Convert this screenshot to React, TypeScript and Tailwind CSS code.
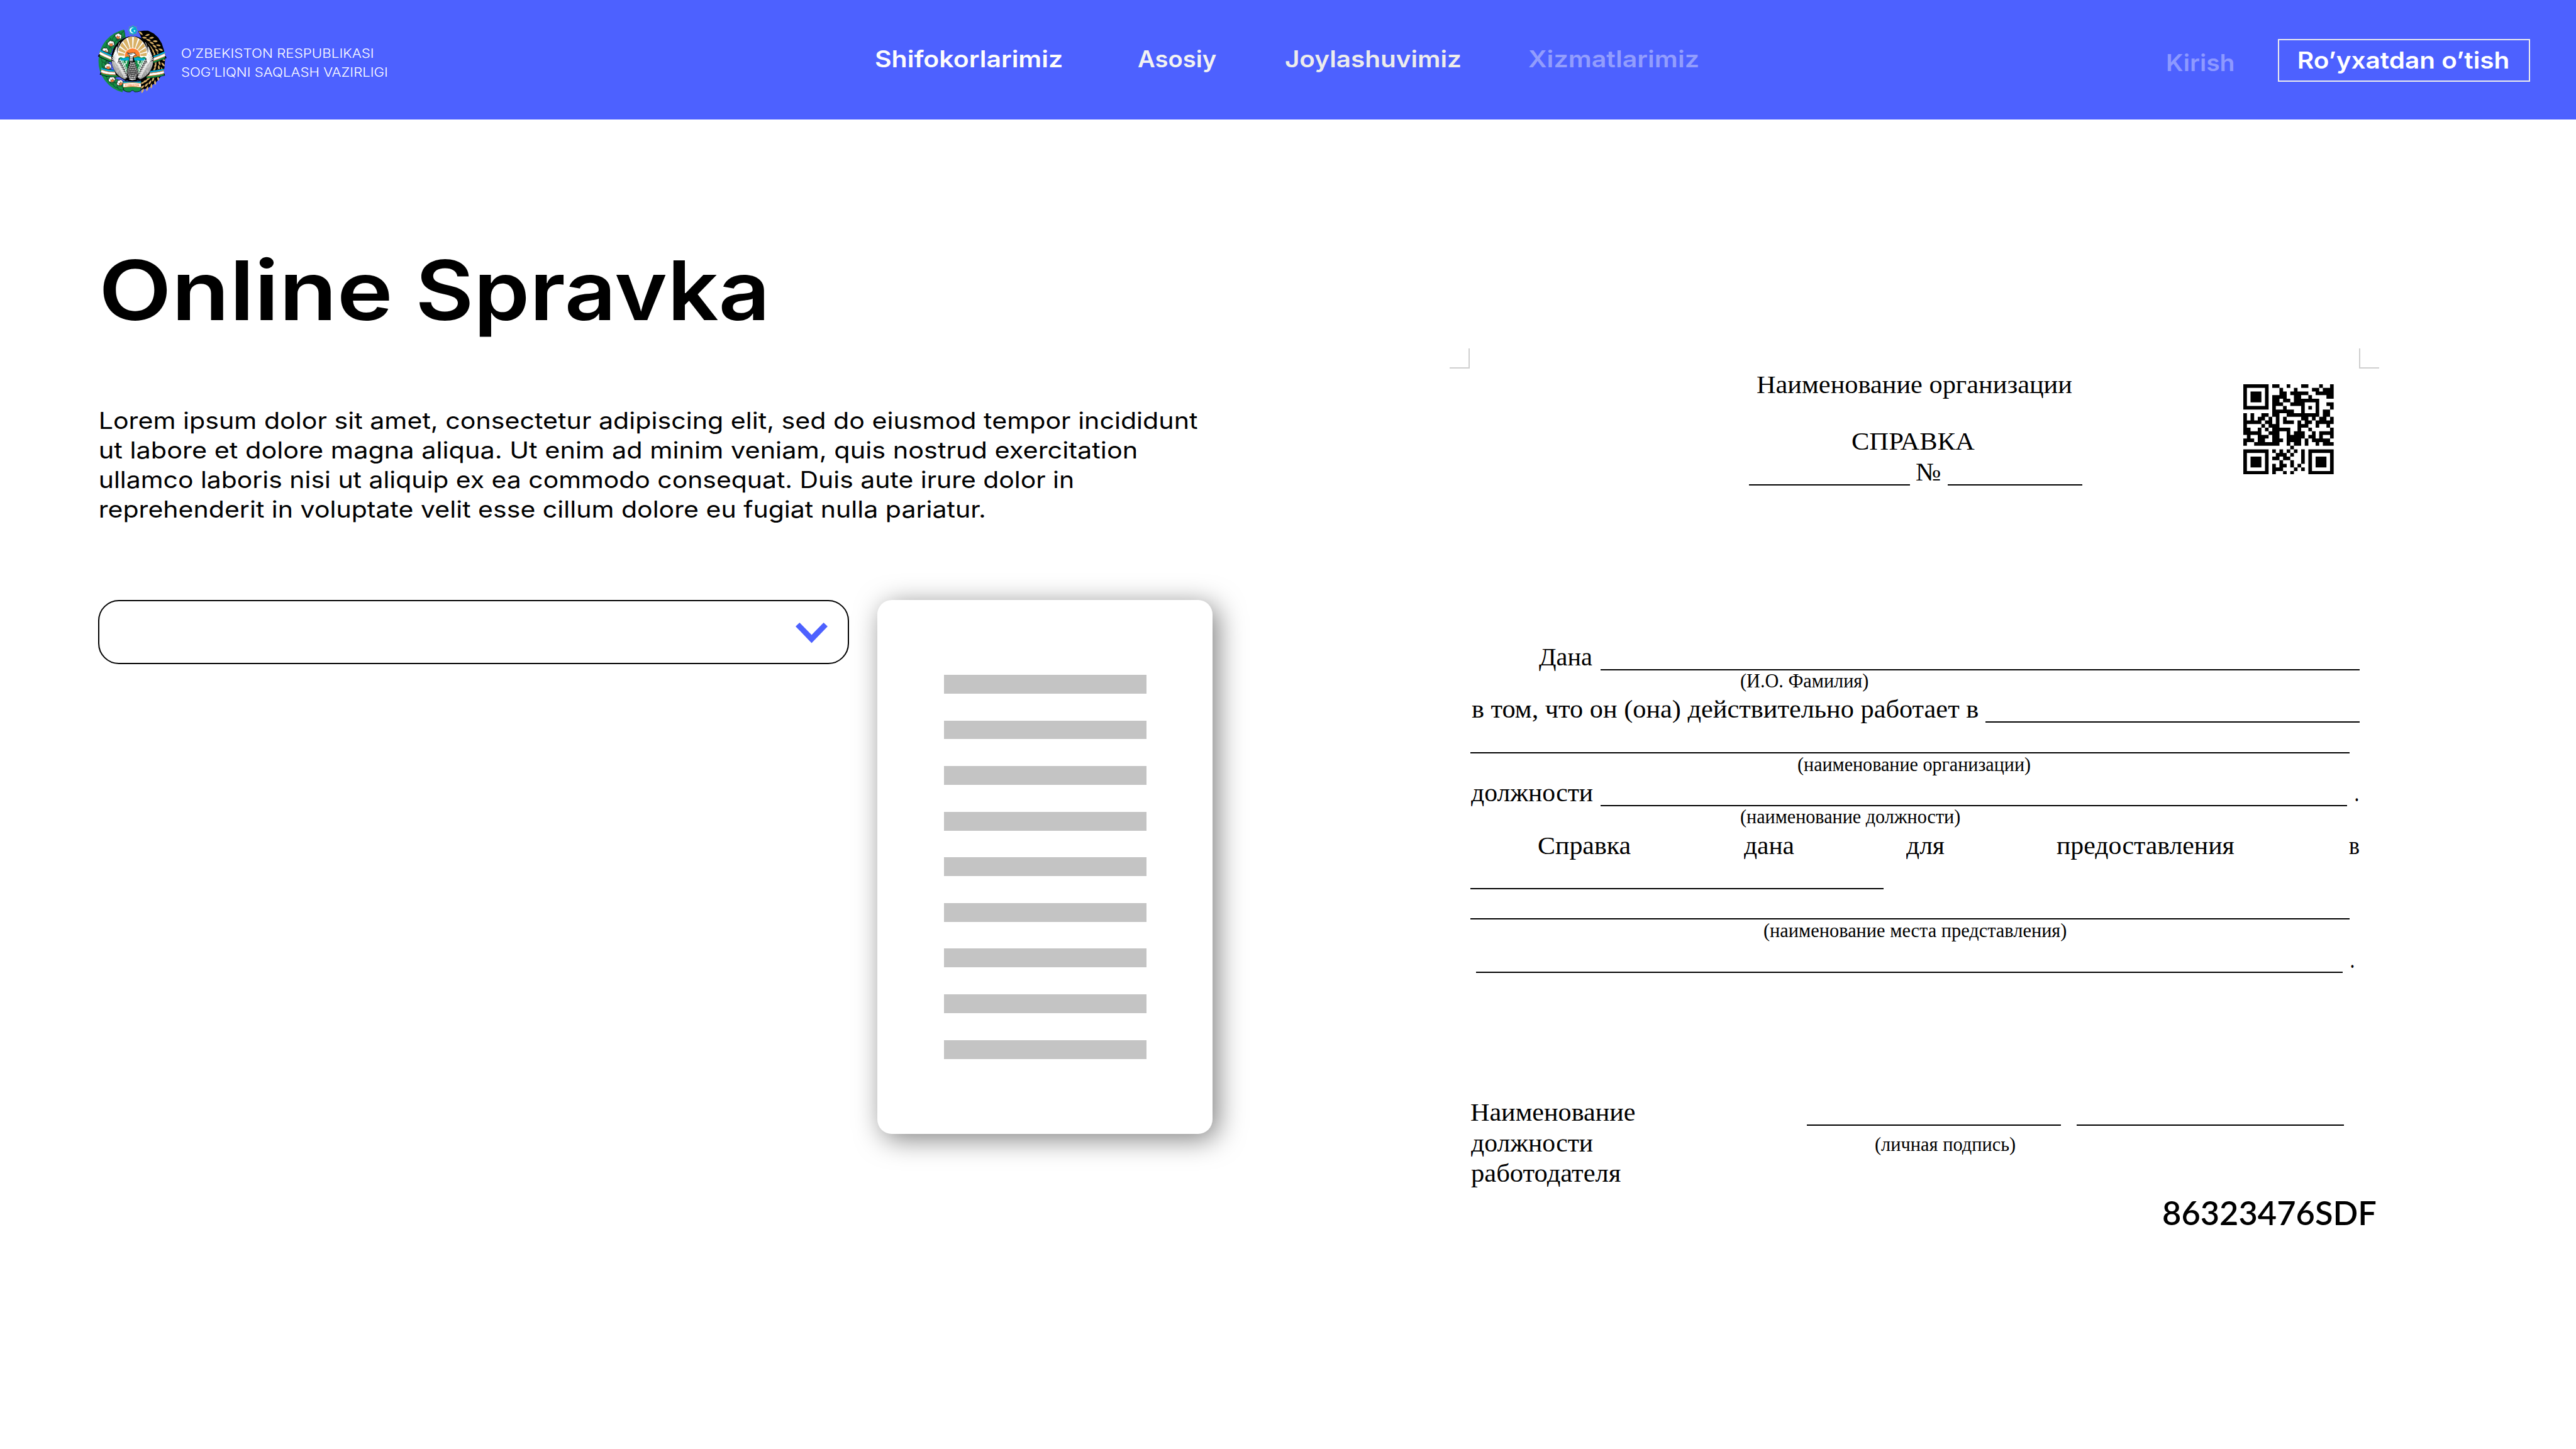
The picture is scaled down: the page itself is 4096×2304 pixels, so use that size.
import { useLayoutEffect, useRef, type ReactNode } from "react";

/** One line of text whose visible glyphs span the full width of its box. */
function Line({ className = "", children }: { className?: string; children: string }) {
  const box = useRef<HTMLDivElement>(null);
  const inner = useRef<HTMLSpanElement>(null);

  useLayoutEffect(() => {
    const el = box.current;
    const span = inner.current;
    const ctx = document.createElement("canvas").getContext("2d");
    if (!el || !span || !ctx) return;
    const cs = getComputedStyle(span);
    ctx.font = `${cs.fontWeight} ${cs.fontSize} ${cs.fontFamily}`;
    const m = ctx.measureText(children);
    const ink = m.actualBoundingBoxLeft + m.actualBoundingBoxRight;
    if (ink <= 0) return;
    const scale = el.getBoundingClientRect().width / ink;
    span.style.transform = `translateX(${m.actualBoundingBoxLeft * scale}px) scaleX(${scale})`;
  }, [children]);

  return (
    <div ref={box} className={`shrink-0 text-left whitespace-nowrap ${className}`}>
      <span ref={inner} className="inline-block origin-left">
        {children}
      </span>
    </div>
  );
}

const range = (n: number) => Array.from({ length: n }, (_, i) => i);
const polar = (cx: number, cy: number, r: number, deg: number) => {
  const a = (deg * Math.PI) / 180;
  return [cx + r * Math.cos(a), cy + r * Math.sin(a)] as const;
};

function Leaf({ x, y, angle, size = 1 }: { x: number; y: number; angle: number; size?: number }) {
  return (
    <path
      d="M-34 0 L-24 -12 L-16 -11 L-10 -20 L-2 -16 L8 -21 L14 -13 L26 -12 L30 -4 L44 0 L30 5 L25 13 L14 13 L8 21 L-2 16 L-10 20 L-16 11 L-24 12 Z"
      transform={`translate(${x} ${y}) rotate(${angle}) scale(${size})`}
      fill="#148d47"
      stroke="#0b2a16"
      strokeWidth="3"
    />
  );
}

function Cotton({ x, y, angle }: { x: number; y: number; angle: number }) {
  return (
    <g transform={`translate(${x} ${y}) rotate(${angle})`}>
      <path
        d="M-27 12 C-38 2 -30 -14 -20 -14 C-18 -27 0 -30 6 -21 C18 -26 30 -14 25 -4 C34 4 28 20 16 20 C6 30 -18 26 -27 12 Z"
        fill="#fff"
        stroke="#000"
        strokeWidth="4"
      />
      <path d="M-20 16 L-11 8 L-14 -2 L0 4 L10 -6 L10 8 L22 14 L8 18 L2 27 L-6 19 Z" fill="#ff7f2f" stroke="#000" strokeWidth="2" />
    </g>
  );
}

function Ribbon({ d }: { d: string }) {
  const strips: [number, number, string][] = [
    [-22, 17, "#00a9d4"],
    [22, 17, "#148d47"],
    [-12, 6, "#ff7f2f"],
    [12, 6, "#ff7f2f"],
    [0, 19, "#fff"],
  ];
  return (
    <g fill="none">
      <path d={d} stroke="#000" strokeWidth="66" />
      {strips.map(([dy, w, color]) => (
        <path key={dy} d={d} transform={`translate(0 ${dy})`} stroke={color} strokeWidth={w} />
      ))}
    </g>
  );
}

function Wing() {
  const n = 34;
  return (
    <g stroke="#fff" strokeLinecap="round" fill="none">
      {range(8).map((i) => (
        <path
          key={i}
          d={`M${206 - i * 2} ${306 + i * 7} Q${178 - i * 4} ${262 + i * 8} ${188 - i * 6} ${214 + i * 15}`}
          strokeWidth="8.5"
        />
      ))}
      {range(n).map((i) => {
        const t = i / (n - 1);
        const [ox, oy] = polar(330, 330, 183, 178 - t * 66);
        const ix = 212 + 66 * t;
        const iy = 362 + 122 * t;
        return <path key={i} d={`M${ix} ${iy} Q${(ix + ox) / 2} ${(iy + oy) / 2 + 5} ${ox} ${oy}`} strokeWidth={4.8 - t * 1.2} />;
      })}
      {range(6).flatMap((r) =>
        range(9).map((c) => {
          const x = 184 + r * 12 + c * 8.5;
          const y = 330 + c * 18 - r * 1 + (r > 3 ? 10 : 0);
          return <path key={`${r}-${c}`} d={`M${x} ${y} l5 10`} strokeWidth="7" />;
        }),
      )}
    </g>
  );
}

function Emblem() {
  return (
    <svg viewBox="0 0 660 660" className="mt-[37.3px] ml-[152px] size-[117.3px] shrink-0">
      <defs>
        <clipPath id="sky">
          <ellipse cx="330" cy="290" rx="130" ry="170" />
        </clipPath>
      </defs>

      <path d="M262 92 A252 252 0 0 0 250 582" fill="none" stroke="#148d47" strokeWidth="74" />
      {range(15).map((i) => {
        const [x, y] = polar(330, 345, 256, 250 - i * 9.6);
        return <Leaf key={i} x={x} y={y} angle={i < 8 ? 290 - i * 9 : 30 + (14 - i) * 6} size={0.95} />;
      })}
      {range(11).map((i) => {
        const [x, y] = polar(330, 345, 222, 240 - i * 11);
        return <Leaf key={i} x={x} y={y} angle={300 - i * 12} size={0.8} />;
      })}

      <path
        d="M383 72 L432 66 L470 66 L520 92 L560 128 L592 180 L612 240 L622 320 L616 400 L588 470 L540 530 L470 580 L410 596 L400 500 L500 330 Z"
        fill="#000"
      />
      {range(15).flatMap((i) =>
        [0, 1, 2].map((k) => {
          const a = -66 + i * 9.4 + k * 2.5;
          const [x, y] = polar(330, 345, 208 + k * 33, a);
          return (
            <path
              key={`${i}-${k}`}
              d="M-23 0 Q-6 -17 23 0 Q-6 17 -23 0 Z"
              fill="#d9b167"
              transform={`translate(${x} ${y}) rotate(${a + 252 + (k - 1) * -28})`}
            />
          );
        }),
      )}
      <path d="M383 72 Q412 68 426 108 Q396 104 383 72 Z" fill="#d9b167" stroke="#000" strokeWidth="3" />

      <Cotton x={205} y={117} angle={20} />
      <Cotton x={139} y={182} angle={0} />
      <Cotton x={84} y={246} angle={-10} />
      <Cotton x={113} y={386} angle={0} />
      <Cotton x={146} y={503} angle={-20} />
      <Cotton x={219} y={532} angle={-30} />

      <Ribbon d="M37 266 Q80 290 150 318" />
      <Ribbon d="M50 428 Q110 454 220 448" />
      <Ribbon d="M621 282 Q585 300 505 328" />
      <Ribbon d="M611 436 Q560 452 455 460" />

      <ellipse cx="330" cy="318" rx="190" ry="202" fill="#000" />
      <ellipse cx="330" cy="290" rx="136" ry="171" fill="#fff" />
      <g clipPath="url(#sky)">
        {[-172, -153, -134, -116, -97.5, -79, -61, -43, -25, -7].map((a) => {
          const [x1, y1] = polar(330, 293, 200, a - 6.6);
          const [x2, y2] = polar(330, 293, 200, a + 6.6);
          return <path key={a} d={`M330 293 L${x1} ${y1} L${x2} ${y2} Z`} fill="#d9b167" />;
        })}
        <circle cx="330" cy="293" r="73" fill="#fff" />
        <circle cx="330" cy="293" r="68" fill="#ff7f2f" />
        <path d="M190 322 L225 303 L250 312 L285 295 L320 308 L350 306 L380 294 L410 308 L435 300 L470 322 V345 H190 Z" fill="#12955a" />
        <path d="M190 325 Q250 312 290 306 Q330 322 372 306 L470 322 V345 H190 Z" fill="#00a9d4" />
        <rect x="190" y="333" width="280" height="140" fill="#148d47" />
        <path d="M286 337 Q262 340 276 350 Q284 358 254 370 M372 337 Q398 340 380 350 Q372 360 406 370" fill="none" stroke="#fff" strokeWidth="8" />
      </g>
      <path d="M214 170 Q182 240 208 312 M446 170 Q478 240 452 312" fill="none" stroke="#fff" strokeWidth="5" />

      <path d="M202 300 Q240 372 262 400 L276 520 L180 460 L146 330 Z M458 300 Q420 372 398 400 L384 520 L480 460 L514 330 Z" fill="#000" />
      <Wing />
      <g transform="matrix(-1 0 0 1 660 0)">
        <Wing />
      </g>

      <path d="M303 290 Q305 350 278 430 Q284 500 304 516 H356 Q378 490 382 430 Q350 350 338 296 Z" fill="#000" />
      {range(9).flatMap((r) => {
        const y = 350 + r * 18;
        const half = r < 5 ? 19 + r * 6 : 43 - (r - 5) * 6;
        const count = r < 5 ? 6 + r : 9;
        return range(count).map((c) => (
          <path
            key={`${r}-${c}`}
            d={`M${330 - half + (2 * half * c) / (count - 1)} ${y + 4 - Math.abs(c - (count - 1) / 2)} v9`}
            stroke="#fff"
            strokeWidth="5.5"
            strokeLinecap="round"
          />
        ));
      })}
      <path
        d="M285 262 Q300 276 320 266 Q336 262 343 268 L352 264 L350 272 L367 286 L347 287 Q338 292 335 306 L337 342 H301 L305 288 Q286 284 285 262 Z"
        fill="#fff"
        stroke="#000"
        strokeWidth="4"
      />
      <path d="M303 302 H335 M303 317 H336 M302 331 H337 M292 272 Q310 282 330 275" stroke="#000" strokeWidth="4" fill="none" />

      <path d="M246 518 Q328 530 408 518 L404 604 Q375 618 348 614 Q330 588 312 614 Q280 620 252 602 Z" fill="#148d47" stroke="#000" strokeWidth="4" />
      <path d="M248 520 Q328 532 406 520 V540 Q328 550 248 540 Z" fill="#00a9d4" />
      <path d="M248 538 Q328 526 406 538 V572 Q328 560 248 572 Z" fill="#fff" />
      <path d="M248 538 Q328 526 406 538 M248 572 Q328 560 406 572" stroke="#ff7f2f" strokeWidth="5" fill="none" />
      <text x="327" y="560" textAnchor="middle" fontSize="19" fontWeight="700" fontFamily="Inter, sans-serif" fill="#ff7f2f" textLength="126">
        O`ZBEKISTON
      </text>

      <path
        d="M334 17 L347 32 L366 31 L365 50 L379 63 L365 76 L366 95 L347 94 L334 108 L320 94 L301 95 L302 76 L288 63 L302 50 L301 31 L320 32 Z"
        fill="#00a9d4"
        stroke="#8f8a8c"
        strokeWidth="4"
      />
      <path d="M346 42 A26 26 0 1 0 346 84 A22 22 0 1 1 346 42 Z" fill="#fff" />
      <path d="M348 57 L350.500 65 L358 65 L352 70 L354.500 78 L348 73 L341.500 78 L344 70 L338 65 L345.500 65 Z" fill="#fff" />
    </svg>
  );
}

const QR_RUNS: [number, number][][] = [
  [[0, 7], [8, 10], [12, 13], [16, 18], [21, 22], [24, 25]],
  [[0, 1], [6, 7], [10, 11], [14, 15], [19, 21], [22, 25]],
  [[0, 1], [2, 5], [6, 7], [10, 12], [13, 18], [20, 25]],
  [[0, 1], [2, 5], [6, 7], [8, 12], [14, 16], [18, 19], [23, 25]],
  [[0, 1], [2, 5], [6, 7], [8, 10], [11, 13], [14, 21]],
  [[0, 1], [6, 7], [8, 11], [13, 17], [20, 21], [23, 25]],
  [[0, 7], [8, 9], [11, 12], [16, 17], [18, 19], [20, 21], [24, 25]],
  [[8, 14], [16, 17], [20, 21], [22, 24]],
  [[0, 1], [2, 3], [5, 7], [8, 10], [12, 21], [22, 24]],
  [[0, 1], [2, 3], [4, 6], [7, 8], [9, 10], [11, 12], [16, 18], [19, 20], [21, 23], [24, 25]],
  [[0, 5], [6, 8], [9, 10], [11, 14], [15, 16], [17, 19], [20, 25]],
  [[0, 1], [5, 6], [7, 10], [15, 18], [20, 21], [23, 24]],
  [[0, 2], [4, 5], [6, 7], [8, 13], [15, 16], [18, 19], [24, 25]],
  [[0, 5], [7, 10], [12, 13], [14, 17], [19, 20], [21, 25]],
  [[1, 2], [4, 7], [8, 10], [12, 17], [18, 20], [21, 22], [24, 25]],
  [[0, 3], [4, 6], [8, 11], [12, 16], [17, 18], [19, 24]],
  [[0, 1], [3, 10], [12, 13], [14, 16], [17, 18], [20, 21], [22, 25]],
  [[13, 14]],
  [[0, 7], [8, 9], [10, 11], [12, 13], [14, 15], [16, 17], [18, 25]],
  [[0, 1], [6, 7], [9, 12], [13, 14], [16, 17], [18, 19], [24, 25]],
  [[0, 1], [2, 5], [6, 7], [8, 10], [11, 13], [16, 17], [18, 19], [20, 23], [24, 25]],
  [[0, 1], [2, 5], [6, 7], [10, 11], [13, 14], [16, 17], [18, 19], [20, 23], [24, 25]],
  [[0, 1], [2, 5], [6, 7], [8, 9], [10, 12], [13, 14], [15, 16], [18, 19], [20, 23], [24, 25]],
  [[0, 1], [6, 7], [8, 11], [14, 15], [16, 17], [18, 19], [24, 25]],
  [[0, 7], [8, 9], [11, 12], [13, 14], [18, 25]],
];

function QrCode({ className }: { className: string }) {
  const d = QR_RUNS.map((row, y) => row.map(([a, b]) => `M${a} ${y}H${b}V${y + 1.02}H${a}Z`).join("")).join("");
  return (
    <svg viewBox="0 0 25 25" className={className}>
      <path d={d} fill="#000" />
    </svg>
  );
}

function Header() {
  return (
    <header className="flex h-[190px] w-full items-start bg-[#4d61ff] font-semibold text-white">
      <Emblem />
      <div className="mt-[70.6px] ml-[19.9px] w-[330px] shrink-0 text-[19.8px] leading-[29.9px] font-light">
        <Line className="w-[304.4px]">O’ZBEKISTON RESPUBLIKASI</Line>
        <Line className="w-[326.600px]">SOG’LIQNI SAQLASH VAZIRLIGI</Line>
      </div>
      <nav className="mt-[70px] ml-[773.1px] flex shrink-0 text-[37px] leading-[48px]">
        <Line className="w-[296.1px] text-[#fcfcfc]">Shifokorlarimiz</Line>
        <Line className="ml-[121px] w-[125.4px] text-[#f2f2f2]">Asosiy</Line>
        <Line className="ml-[108.8px] w-[277.8px] text-[#ececec]">Joylashuvimiz</Line>
        <Line className="ml-[109px] w-[269.800px] text-[#929dfd]">Xizmatlarimiz</Line>
      </nav>
      <Line className="mt-[76px] ml-[746.2px] w-[105.8px] text-[37px] leading-[48px] text-[#8d99ff]">Kirish</Line>
      <button className="mt-[62px] ml-[70px] flex h-[68px] w-[401px] shrink-0 items-start border-2 border-[#ececec] pt-[8px] pl-[31px] text-[37px] leading-[48px]">
        <Line className="w-[333.500px]">Ro’yxatdan o’tish</Line>
      </button>
    </header>
  );
}

function TemplateCard() {
  return (
    <div className="ml-[45px] flex h-[849px] w-[533.4px] shrink-0 flex-col items-center gap-[42.7px] rounded-[23px] bg-white pt-[119px] shadow-[8px_8px_43px_rgba(0,0,0,0.5)]">
      {range(9).map((i) => (
        <div key={i} className="h-[29.9px] w-[322.2px] shrink-0 bg-[#c4c4c4]" />
      ))}
    </div>
  );
}

function Intro() {
  return (
    <section className="w-[2304.5px] shrink-0 pt-[192px] pl-[156px] text-black">
      <h1 className="flex gap-[47.8px] pl-[7.7px] text-[131px] leading-[160px] font-semibold">
        <Line className="w-[455.700px]">Online</Line>
        <Line className="w-[548.6px]">Spravka</Line>
      </h1>
      <div className="mt-[104px] h-[188px] text-[37px] leading-[46.93px] font-[380]">
        <Line className="ml-[4px] w-[1744.3px]">
          Lorem ipsum dolor sit amet, consectetur adipiscing elit, sed do eiusmod tempor incididunt
        </Line>
        <Line className="ml-[3.1px] w-[1647px]">
          ut labore et dolore magna aliqua. Ut enim ad minim veniam, quis nostrud exercitation
        </Line>
        <Line className="ml-[3.1px] w-[1546px]">
          ullamco laboris nisi ut aliquip ex ea commodo consequat. Duis aute irure dolor in
        </Line>
        <Line className="ml-[3.4px] w-[1406px]">
          reprehenderit in voluptate velit esse cillum dolore eu fugiat nulla pariatur.
        </Line>
      </div>
      <div className="mt-[120px] flex items-start">
        <button className="flex h-[102px] w-[1194px] shrink-0 items-start justify-end rounded-[33px] border-2 border-black pt-[34px] pr-[32px]">
          <svg viewBox="0 0 95.5 61" className="h-[32.600px] w-[51px]">
            <path d="M0 11 L12 0 L47.750 36.500 L83.500 0 L95.500 11 L47.750 61 Z" fill="#4d61ff" />
          </svg>
        </button>
        <TemplateCard />
      </div>
    </section>
  );
}

function Rule({ className }: { className: string }) {
  return <div className={`h-[2px] shrink-0 bg-black ${className}`} />;
}

/** A form line in the certificate's body size. */
function Row({ className = "", children }: { className?: string; children: ReactNode }) {
  return <div className={`flex h-[48px] items-start text-[40.8px] leading-[51px] ${className}`}>{children}</div>;
}

/** A caption printed under a blank. */
function Caption({ className, children }: { className: string; children: string }) {
  return <Line className={`h-[32px] text-[30.500px] leading-[33px] ${className}`}>{children}</Line>;
}

function Certificate() {
  return (
    <section className="ml-[0.5px] w-[1478px] shrink-0 pt-[363.6px] font-['Liberation_Serif',serif] text-black">
      <div className="flex h-[32.7px] justify-between">
        <div className="w-[32px] border-r-2 border-b-2 border-[#cfcfcf]" />
        <div className="w-[32px] border-b-2 border-l-2 border-[#cfcfcf]" />
      </div>

      <div className="flex items-start">
        <div className="w-[1262.4px] shrink-0">
          <Row>
            <Line className="ml-[489.2px] w-[500.1px]">Наименование организации</Line>
          </Row>
          <Row className="mt-[42px]">
            <Line className="ml-[640.1px] w-[195.3px]">СПРАВКА</Line>
          </Row>
          <Row className="mt-[0.9px]">
            <Rule className="mt-[45px] ml-[476.4px] w-[255.500px]" />
            <Line className="ml-[9.8px] w-[38.500px]">№</Line>
            <Rule className="mt-[45px] ml-[11.8px] w-[214.1px]" />
          </Row>
        </div>
        <QrCode className="mt-[24.4px] size-[143.700px]" />
      </div>

      <Row className="mt-[246px]">
        <Line className="ml-[142px] w-[84.8px]">Дана</Line>
        <Rule className="mt-[44.700px] ml-[12.9px] w-[1207.3px]" />
      </Row>
      <Caption className="ml-[462.6px] w-[202.2px]">(И.О. Фамилия)</Caption>

      <Row className="mt-[3px]">
        <Line className="ml-[34.500px] w-[804.9px]">в том, что он (она) действительно работает в</Line>
        <Rule className="mt-[45px] ml-[12.8px] w-[594.8px]" />
      </Row>
      <Rule className="mt-[46.3px] ml-[32.500px] w-[1398.700px]" />
      <Caption className="mt-[1.3px] ml-[554.3px] w-[368.9px]">(наименование организации)</Caption>

      <Row className="mt-[3.3px]">
        <Line className="ml-[33.500px] w-[193.3px]">должности</Line>
        <Rule className="mt-[45px] ml-[12.9px] w-[1187.500px]" />
        <Line className="ml-[13.200px] w-[4.600px]">.</Line>
      </Row>
      <Caption className="ml-[462.6px] w-[348.1px]">(наименование должности)</Caption>

      <Row className="mt-[3.8px]">
        <Line className="ml-[141px] w-[147px]">Справка</Line>
        <Line className="ml-[179.500px] w-[79.9px]">дана</Line>
        <Line className="ml-[178.500px] w-[61.2px]">для</Line>
        <Line className="ml-[177.6px] w-[283px]">предоставления</Line>
        <Line className="ml-[182.500px] w-[15.8px]">в</Line>
      </Row>
      <Rule className="mt-[45.3px] ml-[32.500px] w-[657.9px]" />
      <Rule className="mt-[45.500px] ml-[32.500px] w-[1398.700px]" />
      <Caption className="mt-[2.6px] ml-[500.1px] w-[480.3px]">(наименование места представления)</Caption>
      <Row className="mt-[3.3px]">
        <Rule className="mt-[45.6px] ml-[42.4px] w-[1377.9px]" />
        <Line className="ml-[12.800px] w-[4.600px]">.</Line>
      </Row>

      <div className="mt-[195.9px] flex items-start">
        <div className="ml-[33.500px] w-[534.6px] shrink-0">
          <Row>
            <Line className="w-[260.4px]">Наименование</Line>
          </Row>
          <Row className="mt-[0.7px]">
            <Line className="w-[193.3px]">должности</Line>
          </Row>
          <Row className="-mt-[0.3px]">
            <Line className="w-[238.700px]">работодателя</Line>
          </Row>
        </div>
        <div className="w-[404.4px] shrink-0 pt-[45px]">
          <Rule className="w-[404.4px]" />
          <Caption className="mt-[13.4px] ml-[108.500px] w-[222px]">(личная подпись)</Caption>
        </div>
        <Rule className="mt-[45px] ml-[24.700px] w-[425.1px]" />
      </div>

      <Line className="mt-[12px] ml-[1134.8px] w-[338.2px] font-['Lato',sans-serif] text-[52.600px] leading-[56px] font-semibold">
        86323476SDF
      </Line>
    </section>
  );
}

export default function App() {
  return (
    <div className="h-[2304px] w-[4096px] overflow-hidden bg-white font-['Inter',sans-serif]">
      <Header />
      <main className="flex items-start">
        <Intro />
        <Certificate />
      </main>
    </div>
  );
}
